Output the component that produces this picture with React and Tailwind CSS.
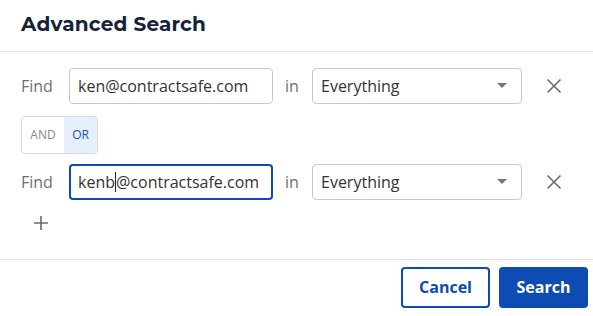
import { useState } from "react";

const Caret = () => (
  <svg width="10" height="6" viewBox="0 0 10 6" className="shrink-0">
    <path d="M0 0h10L5 5z" fill="#757575" />
  </svg>
);

const Cross = () => (
  <svg width="16" height="16" viewBox="0 0 16 16">
    <path d="M1.5 1.5l13 13M14.5 1.5l-13 13" stroke="#6b6b6b" strokeWidth="1.6" />
  </svg>
);

const FindRow = ({ value, focused }) => (
  <div className="flex items-center h-[36px]">
    <span className="w-[48px] text-[16px] text-[#6f6f6f]">Find</span>
    <div
      className={
        focused
          ? "w-[204px] h-[36px] rounded-[4px] border-2 border-[#0c4cb3] flex items-center pl-[7px] text-[16px] text-[#333]"
          : "w-[204px] h-[36px] rounded-[4px] border border-[#c8c8c8] flex items-center pl-[8px] text-[16px] text-[#333]"
      }
    >
      {focused ? (
        <>
          kenb<span className="inline-block w-px h-[20px] bg-[#222]" />@contractsafe.com
        </>
      ) : (
        value
      )}
    </div>
    <span className="w-[39px] pl-[12px] text-[16px] text-[#6f6f6f]">in</span>
    <div className="w-[210px] h-[36px] rounded-[4px] border border-[#c8c8c8] flex items-center justify-between pl-[8px] pr-[14px] text-[16px] text-[#333]">
      Everything
      <Caret />
    </div>
    <button className="ml-[24px] w-[16px] h-[16px]">
      <Cross />
    </button>
  </div>
);

export default function App() {
  const [mode, setMode] = useState("OR");
  return (
    <div className="w-[593px] h-[316px] bg-white font-['Open_Sans',sans-serif] flex flex-col">
      <div className="h-[52px] border-b border-[#e2e2e2] flex items-center px-[21px] pb-[3px]">
        <h1 className="text-[20px] font-bold tracking-[0.2px] text-[#14233a] font-['Montserrat','Open_Sans',sans-serif]">
          Advanced Search
        </h1>
      </div>
      <div className="flex-1 px-[21px] pt-[16px] border-b border-[#e2e2e2] flex flex-col">
        <FindRow value="ken@contractsafe.com" />
        <div className="mt-[12px] mb-[10px] flex w-[77px] h-[38px] rounded-[4px] border border-[#d6dbe3] overflow-hidden text-[12px]">
          <button
            onClick={() => setMode("AND")}
            className={mode === "AND" ? "w-[42px] bg-[#e6f0fc] text-[#1e4fa8]" : "w-[42px] text-[#8a8a8a]"}
          >
            AND
          </button>
          <button
            onClick={() => setMode("OR")}
            className={mode === "OR" ? "flex-1 bg-[#e6f0fc] text-[#1e4fa8]" : "flex-1 text-[#8a8a8a]"}
          >
            OR
          </button>
        </div>
        <FindRow focused />
        <button className="mt-[15px] ml-[12px] w-[16px] h-[16px]">
          <svg width="16" height="16" viewBox="0 0 16 16">
            <path d="M8 1v14M1 8h14" stroke="#6b6b6b" strokeWidth="1.6" />
          </svg>
        </button>
      </div>
      <div className="h-[56px] flex items-center justify-end gap-[9px] pr-[5px] pb-[5px] pt-[3px]">
        <button className="w-[89px] h-[41px] rounded-[4px] border-2 border-[#0c4cb3] text-[#0c4cb3] text-[16px] font-bold">
          Cancel
        </button>
        <button className="w-[89px] h-[41px] rounded-[4px] bg-[#0c4cb3] text-white text-[16px] font-bold">
          Search
        </button>
      </div>
    </div>
  );
}
